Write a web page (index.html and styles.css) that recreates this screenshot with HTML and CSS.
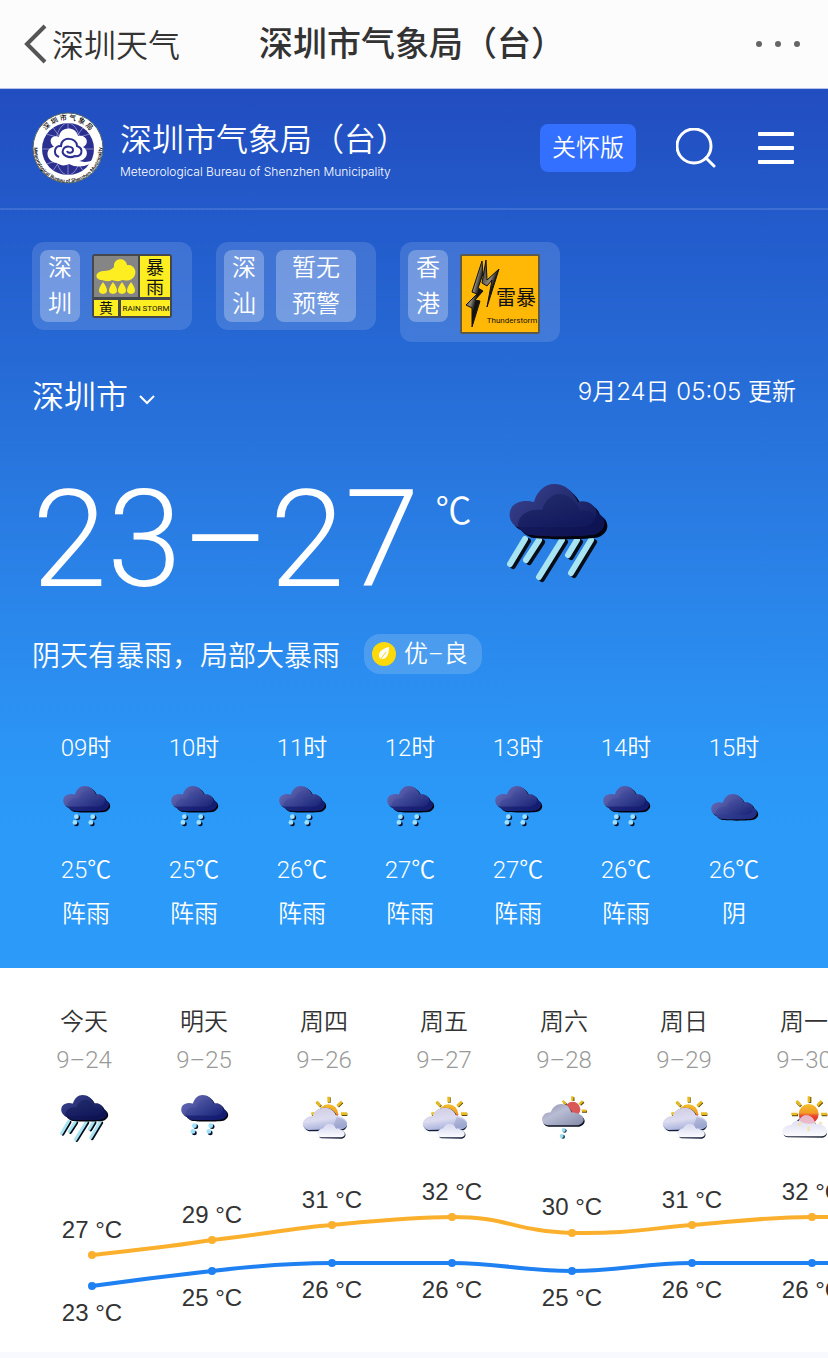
FILE: index.html
```html
<!DOCTYPE html>
<html lang="zh-CN">
<head>
<meta charset="utf-8">
<meta name="viewport" content="width=device-width, initial-scale=1">
<title>深圳市气象局（台）</title>
<link rel="stylesheet" href="styles.css">
</head>
<body>
<svg class="defs" aria-hidden="true">
  <defs>
    <linearGradient id="stormBack" x1="0" y1="0" x2="1" y2="0.6"><stop offset="0" stop-color="#3c4490"/><stop offset="1" stop-color="#141b5c"/></linearGradient>
    <linearGradient id="stormFront" x1="0" y1="0" x2="0.4" y2="1"><stop offset="0" stop-color="#1e2a66"/><stop offset="1" stop-color="#12185c"/></linearGradient>
    <linearGradient id="showerBack" x1="0" y1="0" x2="1" y2="0.6"><stop offset="0" stop-color="#6e72bc"/><stop offset="1" stop-color="#202a7c"/></linearGradient>
    <linearGradient id="showerFront" x1="0" y1="0" x2="1" y2="0.8"><stop offset="0" stop-color="#5560ae"/><stop offset="1" stop-color="#1d277a"/></linearGradient>
    <linearGradient id="sun" x1="0" y1="0" x2="0" y2="1"><stop offset="0" stop-color="#f3c02a"/><stop offset="0.45" stop-color="#f39a27"/><stop offset="0.6" stop-color="#e8442c"/><stop offset="1" stop-color="#e2262a"/></linearGradient>
    <linearGradient id="pale" x1="0" y1="0" x2="0.3" y2="1"><stop offset="0" stop-color="#cfc9de"/><stop offset="0.6" stop-color="#dcdcf0"/><stop offset="1" stop-color="#a9b2dc"/></linearGradient>
    <linearGradient id="white" x1="0" y1="0" x2="0" y2="1"><stop offset="0" stop-color="#d4d6ee"/><stop offset="1" stop-color="#fbfbff"/></linearGradient>
    <linearGradient id="gray" x1="0" y1="0" x2="1" y2="1"><stop offset="0" stop-color="#8e8fae"/><stop offset="0.4" stop-color="#b9bdd4"/><stop offset="1" stop-color="#8389a8"/></linearGradient>
    <linearGradient id="bolt" x1="0" y1="0" x2="1" y2="1"><stop offset="0" stop-color="#222"/><stop offset="0.45" stop-color="#8d8878"/><stop offset="0.6" stop-color="#111"/><stop offset="1" stop-color="#222"/></linearGradient>
    <path id="cloud" d="M15 47C4 43 4 27 14 23C20 20 26 21 31 22C34 11 42 4 51 4C62 4 70 11 75 22C84 19 92 25 94 32C104 38 104 49 93 54C86 57 28 57 24 54C20 52 17 50 15 47Z"/>
    <path id="cloudFront" d="M15 47C14 35 26 28 39 30C42 20 49 14 56 14C66 14 73 21 77 31C88 29 94 35 92 42C91 46 84 47 74 47H16Z"/>
    <path id="cloudBase" d="M15 47H74C88 47 94 42 93 32C104 38 104 49 93 54C86 57 28 57 24 54C20 52 17 50 15 47Z"/>
  </defs>
  <symbol id="heavy" viewBox="0 0 108 104">
    <g fill="none" stroke-width="6" stroke-linecap="round">
      <path stroke="#060d18" d="M25 61L10 86M39 62L26 82M62 62L39 99M77 62L68 77M91 62L71 95"/>
      <path stroke="#a8e4f2" d="M22 59L7 84M36 60L23 80M59 60L36 97M74 60L65 75M88 60L68 93"/>
    </g>
    <use href="#cloud" x="3" y="3" fill="#02040f"/>
    <use href="#cloud" fill="url(#stormBack)"/>
    <use href="#cloudFront" fill="url(#stormFront)" opacity=".8"/>
    <use href="#cloudBase" fill="#0c1250" opacity=".75"/>
  </symbol>
  <symbol id="shower" viewBox="0 0 108 104">
    <g fill="#060d28"><circle cx="37" cy="70" r="5"/><circle cx="34" cy="83" r="5"/><circle cx="71" cy="70" r="5"/><circle cx="67" cy="83" r="5"/></g>
    <g fill="#9fe2ff"><circle cx="34" cy="68" r="5"/><circle cx="31" cy="80" r="5"/><circle cx="68" cy="68" r="5"/><circle cx="64" cy="80" r="5"/></g>
    <use href="#cloud" x="3" y="3" fill="#02040f"/>
    <use href="#cloud" fill="url(#showerBack)"/>
    <use href="#cloudFront" fill="url(#showerFront)" opacity=".7"/>
    <use href="#cloudBase" fill="#10196e" opacity=".75"/>
  </symbol>
  <symbol id="overcast" viewBox="0 -17 108 104">
    <use href="#cloud" x="3" y="3" fill="#02040f"/>
    <use href="#cloud" fill="url(#showerBack)"/>
    <use href="#cloudFront" fill="url(#showerFront)" opacity=".7"/>
    <use href="#cloudBase" fill="#26358c" opacity=".6"/>
  </symbol>
  <symbol id="partly" viewBox="-4 0 156 150">
    <path d="M90 13V29M129 28L116 41M144 65H127M53 28L65 41M38 65H48" stroke="#5c4a10" stroke-width="8"/>
    <path d="M88 11V28M127 26L114 39M143 62H125M51 26L63 39M36 62H46" stroke="#e8bc1e" stroke-width="8"/>
    <circle cx="87" cy="64" r="30" fill="url(#sun)"/>
    <path d="M30 115C6 108 4 78 42 70C46 54 60 45 76 44C94 44 107 54 113 70C150 82 150 106 128 114Z" fill="#141c38"/>
    <path d="M28 111C2 104 4 74 40 68C46 52 60 44 76 44C94 44 105 54 109 66C150 76 152 100 130 108Z" fill="url(#pale)"/>
    <path d="M112 72C146 80 148 98 128 106H100Z" fill="#8e96c0" opacity=".45"/>
    <path d="M66 136C54 134 54 114 76 109C82 100 104 96 114 109C144 112 144 134 128 137Z" fill="#141c38"/>
    <path d="M64 133C50 132 48 111 72 106C75 97 83 92 91 92C99 92 107 97 110 106C142 110 142 131 126 133Z" fill="url(#white)"/>
  </symbol>
  <symbol id="drizzle" viewBox="0 0 156 150">
    <path d="M106 13V24M137 27L127 36M147 56H132M77 27L86 36" stroke="#5c4a10" stroke-width="7"/>
    <path d="M103 10V23M134 24L124 34M145 53H131M74 23L83 33" stroke="#e8bc1e" stroke-width="7"/>
    <circle cx="104" cy="49" r="23" fill="#d95757"/>
    <g transform="translate(3 4)"><path d="M28 97C4 92 8 58 38 58C44 42 56 33 70 33C86 33 96 43 100 58C142 60 148 90 120 97Z" fill="#0c1120"/></g>
    <path d="M28 97C4 92 8 58 38 58C44 42 56 33 70 33C86 33 96 43 100 58C142 60 148 90 120 97Z" fill="url(#gray)"/>
    <g fill="#14324a"><circle cx="80" cy="113" r="6"/><circle cx="75" cy="131" r="6"/></g>
    <g fill="#98dcec"><circle cx="77" cy="111" r="6"/><circle cx="71" cy="129" r="6"/></g>
  </symbol>
  <symbol id="sunny" viewBox="0 0 156 150">
    <path d="M96 12V30M133 27L120 40M148 66H131M42 66H60M57 27L69 40" stroke="#5c4a10" stroke-width="8"/>
    <path d="M93 10V28M131 24L118 37M147 63H129M40 63H58M55 24L68 37" stroke="#e8bc1e" stroke-width="8"/>
    <circle cx="92" cy="63" r="30" fill="url(#sun)"/>
    <path d="M28 133C10 130 12 106 44 99C70 62 98 60 115 96C150 98 156 130 134 134Z" fill="#20263a"/>
    <path d="M28 130C4 126 8 98 40 96C46 84 54 82 62 84C72 60 104 60 112 92C150 92 158 126 132 130Z" fill="url(#white)"/>
    <path d="M63 82C72 62 104 60 111 90C98 94 76 94 63 82Z" fill="#f0a4b4" opacity=".65"/>
    <path d="M92 99V115M61 99L69 88M124 88L131 94" stroke="#f3e4b8" stroke-width="8"/>
  </symbol>
</svg>

<nav class="appbar">
  <button class="back" type="button">
    <svg width="24" height="40" viewBox="0 0 24 40" fill="none" aria-hidden="true"><path d="M21 2L3 20L21 38" stroke="#555" stroke-width="4"/></svg>
    <span>深圳天气</span>
  </button>
  <h1 class="appbar-title">深圳市气象局（台）</h1>
  <button class="more" type="button" aria-label="更多">
    <svg width="44" height="8" viewBox="0 0 44 8" fill="#666" aria-hidden="true"><circle cx="3" cy="4" r="3"/><circle cx="22" cy="4" r="3"/><circle cx="41" cy="4" r="3"/></svg>
  </button>
</nav>

<main>
<section class="hero">
  <header class="brand">
    <svg class="logo" viewBox="0 0 72 72" aria-hidden="true">
      <defs>
        <path id="arcTop" d="M8 36A28 28 0 0 1 64 36"/>
        <path id="arcBottom" d="M4 25A34 34 0 1 0 68 25"/>
        <clipPath id="globe"><circle cx="36" cy="37" r="26"/></clipPath>
      </defs>
      <circle cx="36" cy="36" r="35" fill="#fff" stroke="#566" stroke-width="1"/>
      <circle cx="36" cy="37" r="26" fill="#2b2f8f"/>
      <g clip-path="url(#globe)" fill="none" stroke="#a9aee0" stroke-width=".7">
        <ellipse cx="36" cy="37" rx="13" ry="26"/><path d="M36 10V64M10 37H62M14 22Q36 30 58 22M14 52Q36 44 58 52M20 14L52 60M52 14L20 60"/>
      </g>
      <path d="M25 51C14 50 12 36 22 35C15 29 20 22 27 25C28 14 44 14 46 24C55 22 58 32 51 35C58 39 55 48 47 49C52 51 58 50 63 47C59 54 46 57 37 52C33 54 29 54 25 51Z" fill="#fff"/>
      <path d="M27 45C20 42 23 33 29 34C29 24 45 25 45 34C53 37 49 46 43 44C37 47 29 43 31 38C33 33 41 34 41 38C41 41 36 42 35 39" fill="none" stroke="#2b2f8f" stroke-width="2"/>
      <text class="logo-cn"><textPath href="#arcTop" startOffset="50%">深 圳 市 气 象 局</textPath></text>
      <text class="logo-en"><textPath href="#arcBottom" startOffset="50%">Meteorological Bureau of Shenzhen Municipality</textPath></text>
    </svg>
    <div class="brand-name">
      <p class="brand-cn">深圳市气象局（台）</p>
      <p class="brand-en">Meteorological Bureau of Shenzhen Municipality</p>
    </div>
    <button class="care" type="button">关怀版</button>
    <button class="icon-button" type="button" aria-label="搜索">
      <svg width="42" height="40" viewBox="0 0 42 40" fill="none" stroke="#fff" stroke-width="3" aria-hidden="true"><circle cx="18" cy="18" r="17"/><path d="M30 30L38 38" stroke-linecap="round"/></svg>
    </button>
    <button class="icon-button" type="button" aria-label="菜单">
      <svg width="36" height="32" viewBox="0 0 36 32" fill="#fff" aria-hidden="true"><rect width="36" height="4" rx="1"/><rect y="14" width="36" height="4" rx="1"/><rect y="28" width="36" height="4" rx="1"/></svg>
    </button>
  </header>

  <ul class="alerts">
    <li class="alert">
      <span class="place">深圳</span>
      <svg class="sign" width="80" height="64" viewBox="0 0 80 64" role="img" aria-label="暴雨黄色预警">
        <rect width="80" height="64" rx="3" fill="#44484c"/>
        <rect x="2" y="2" width="44" height="41" fill="#858585"/>
        <path d="M48 2H78V43H48ZM2 46H26V62H2ZM29 46H78V62H29Z" fill="#fdee21"/>
        <path d="M10 26C3 26 2 18 11 17C16 17 19 16 22 13C21 3 34 3 35 11C43 10 46 19 41 24C37 28 32 26 30 26C27 28 23 27 20 26C17 28 13 27 10 26Z" fill="#fdee21"/>
        <path d="M11 28Q3 39 11 40Q19 39 11 28ZM21 28Q13 39 21 40Q29 39 21 28ZM30 28Q22 39 30 40Q38 39 30 28ZM39 28Q31 39 39 40Q47 39 39 28Z" fill="#fdee21"/>
        <g class="sign-text"><text x="63" y="20" font-size="18">暴</text><text x="63" y="40" font-size="18">雨</text><text x="14" y="59" font-size="14">黄</text><text class="latin" x="54" y="57" font-size="8">RAIN STORM</text></g>
      </svg>
    </li>
    <li class="alert">
      <span class="place">深汕</span>
      <span class="none">暂无预警</span>
    </li>
    <li class="alert">
      <span class="place">香港</span>
      <svg class="sign" width="80" height="80" viewBox="0 0 80 80" role="img" aria-label="雷暴警告">
        <rect x="1" y="1" width="78" height="78" rx="1" fill="#ffb806" stroke="#5c5a4c" stroke-width="2"/>
        <path d="M22 7L12 38L17 40L6 51L12 54V73L20 47L15 46L23 37L18 34L23 20Z" fill="url(#bolt)" stroke="#111"/>
        <path d="M26 6L22 29L27 32L32 26L27 53L39 15L27 26Z" fill="url(#bolt)" stroke="#111"/>
        <g class="sign-text"><text x="56" y="51" font-size="20">雷暴</text><text class="latin" x="52" y="69" font-size="8">Thunderstorm</text></g>
      </svg>
    </li>
  </ul>

  <div class="where">
    <label class="city">
      <select aria-label="选择城市"><option>深圳市</option></select>
      <svg width="16" height="10" viewBox="0 0 16 10" fill="none" aria-hidden="true"><path d="M1 1L8 8L15 1" stroke="#fff" stroke-width="2"/></svg>
    </label>
    <time class="updated">9月24日 05:05 更新</time>
  </div>

  <div class="now">
    <span class="range">23–27</span>
    <span class="unit">℃</span>
    <svg class="now-icon" role="img" aria-label="暴雨"><use href="#heavy"/></svg>
  </div>

  <div class="summary">
    <p>阴天有暴雨，局部大暴雨</p>
    <span class="air">
      <svg width="24" height="24" viewBox="0 0 24 24" aria-hidden="true"><circle cx="12" cy="12" r="12" fill="#fbd90b"/><path d="M17 5C9 7 5 11 8 17C15 18 17 12 17 5Z" fill="#fff"/><path d="M7 19L14 10" stroke="#fbd90b" fill="none"/></svg>
      优–良
    </span>
  </div>

  <ul class="hours">
    <li><time>09时</time><svg class="icon"><use href="#shower"/></svg><span>25<span class="degree">℃</span></span><span class="sky">阵雨</span></li>
    <li><time>10时</time><svg class="icon"><use href="#shower"/></svg><span>25<span class="degree">℃</span></span><span class="sky">阵雨</span></li>
    <li><time>11时</time><svg class="icon"><use href="#shower"/></svg><span>26<span class="degree">℃</span></span><span class="sky">阵雨</span></li>
    <li><time>12时</time><svg class="icon"><use href="#shower"/></svg><span>27<span class="degree">℃</span></span><span class="sky">阵雨</span></li>
    <li><time>13时</time><svg class="icon"><use href="#shower"/></svg><span>27<span class="degree">℃</span></span><span class="sky">阵雨</span></li>
    <li><time>14时</time><svg class="icon"><use href="#shower"/></svg><span>26<span class="degree">℃</span></span><span class="sky">阵雨</span></li>
    <li><time>15时</time><svg class="icon"><use href="#overcast"/></svg><span>26<span class="degree">℃</span></span><span class="sky">阴</span></li>
  </ul>
</section>

<section class="week">
  <ul class="days">
    <li><span>今天</span><time>9–24</time><svg class="icon"><use href="#heavy"/></svg></li>
    <li><span>明天</span><time>9–25</time><svg class="icon"><use href="#shower"/></svg></li>
    <li><span>周四</span><time>9–26</time><svg class="icon"><use href="#partly"/></svg></li>
    <li><span>周五</span><time>9–27</time><svg class="icon"><use href="#partly"/></svg></li>
    <li><span>周六</span><time>9–28</time><svg class="icon"><use href="#drizzle"/></svg></li>
    <li><span>周日</span><time>9–29</time><svg class="icon"><use href="#partly"/></svg></li>
    <li><span>周一</span><time>9–30</time><svg class="icon"><use href="#sunny"/></svg></li>
  </ul>
  <svg class="chart" width="840" height="209" viewBox="0 0 840 209" role="img" aria-label="七天最高和最低气温">
    <g fill="none" stroke-width="4">
      <path stroke="#fbb02d" d="M68 112C104 108 152 103 188 97C230 93 268 85 308 82C350 78 388 74 428 74C484 74 490 88 548 90C604 91 628 85 668 82C716 78 744 74 788 74H840"/>
      <path stroke="#1f80f2" d="M68 143C104 138 152 132 188 128C230 123 262 120 308 120H428C474 120 500 128 548 128C596 128 620 120 668 120H840"/>
    </g>
    <g fill="#fbb02d"><circle cx="68" cy="112" r="4"/><circle cx="188" cy="97" r="4"/><circle cx="308" cy="82" r="4"/><circle cx="428" cy="74" r="4"/><circle cx="548" cy="90" r="4"/><circle cx="668" cy="82" r="4"/><circle cx="788" cy="74" r="4"/></g>
    <g fill="#1f80f2"><circle cx="68" cy="143" r="4"/><circle cx="188" cy="128" r="4"/><circle cx="308" cy="120" r="4"/><circle cx="428" cy="120" r="4"/><circle cx="548" cy="128" r="4"/><circle cx="668" cy="120" r="4"/><circle cx="788" cy="120" r="4"/></g>
    <g class="chart-text">
      <text x="68" y="95">27 °C</text><text x="188" y="80">29 °C</text><text x="308" y="65">31 °C</text><text x="428" y="57">32 °C</text><text x="548" y="72">30 °C</text><text x="668" y="65">31 °C</text><text x="788" y="57">32 °C</text>
      <text x="68" y="178">23 °C</text><text x="188" y="163">25 °C</text><text x="308" y="155">26 °C</text><text x="428" y="155">26 °C</text><text x="548" y="163">25 °C</text><text x="668" y="155">26 °C</text><text x="788" y="155">26 °C</text>
    </g>
  </svg>
</section>
</main>
</body>
</html>
```

FILE: styles.css
```css
* {
  box-sizing: border-box;
}

body {
  margin: 0;
  background: #f8f8ff;
  color: #333;
  font-family: Roboto, "Noto Sans CJK SC", sans-serif;
  font-size: 24px;
  font-weight: 350;
  line-height: 32px;
}

h1, p, ul {
  margin: 0;
  padding: 0;
}

ul {
  list-style: none;
}

button, select {
  padding: 0;
  border: 0;
  background: none;
  color: inherit;
  font: inherit;
}

svg {
  display: block;
  flex: none;
}

.defs {
  position: absolute;
  width: 0;
  height: 0;
}

.appbar {
  display: grid;
  grid-template-columns: 1fr auto 1fr;
  align-items: center;
  height: 89px;
  padding: 0 28px 0 24px;
  border-bottom: 1px solid #b4c3ea;
  background: #fcfcfc;
}

.back {
  display: flex;
  align-items: center;
  gap: 4px;
  font-size: 32px;
}

.back span {
  padding-top: 4px;
}

.appbar-title {
  font-size: 34px;
  font-weight: 500;
  line-height: 48px;
}

.more {
  justify-self: end;
}

.hero {
  padding-bottom: 38px;
  background: linear-gradient(#224dc0, #235ccc 16%, #2669d5 30%, #2a83e8 56%, #2b94f4 74%, #2b9af8 84%, #2b9af8);
  color: #fff;
}

.brand {
  display: flex;
  align-items: center;
  height: 121px;
  padding: 0 34px 2px 32px;
  border-bottom: 2px solid #ffffff20;
}

.logo {
  width: 72px;
  height: 72px;
}

.logo-cn {
  font-size: 7px;
  font-weight: 500;
  text-anchor: middle;
  word-spacing: normal;
}

.logo-en {
  font-size: 5px;
  font-weight: 500;
  text-anchor: middle;
}

.brand-name {
  flex: 1;
  padding: 8px 0 0 16px;
  white-space: nowrap;
}

.brand-cn {
  font-size: 32px;
  line-height: 40px;
}

.brand-en {
  font-family: Inter, sans-serif;
  font-size: 12px;
  font-weight: 300;
  line-height: 24px;
}

.care {
  width: 96px;
  height: 48px;
  border-radius: 8px;
  background: #3370ff;
}

.icon-button {
  margin-left: 40px;
}

.alerts {
  display: flex;
  align-items: flex-start;
  gap: 24px;
  padding: 32px 32px 0;
}

.alert {
  display: flex;
  align-items: flex-start;
  gap: 12px;
  width: 160px;
  padding: 8px;
  border-radius: 12px;
  background: #ffffff20;
}

.place, .none {
  width: 40px;
  padding: 0 8px;
  border-radius: 8px;
  background: #ffffff44;
  line-height: 36px;
}

.none {
  width: 80px;
  padding: 0 16px;
}

.sign {
  margin-top: 4px;
}

.sign-text {
  fill: #111;
  font-weight: 400;
  text-anchor: middle;
}

.latin {
  font-family: Roboto, sans-serif;
}

.where {
  display: flex;
  justify-content: space-between;
  padding: 30px 32px 0;
}

.city {
  display: flex;
  align-items: center;
  gap: 10px;
}

.city select {
  height: 50px;
  appearance: none;
  font-size: 32px;
}

.city svg {
  margin-top: 6px;
}

.updated {
  font-family: Inter, "Noto Sans CJK SC", sans-serif;
  line-height: 40px;
}

.now {
  display: flex;
  align-items: flex-start;
  padding: 58px 32px 0;
}

.range {
  font-size: 135px;
  font-weight: 300;
  line-height: 120px;
}

.unit {
  padding: 4px 0 0 16px;
  font-size: 36px;
  line-height: 48px;
}

.unit, .degree {
  font-family: "Noto Sans CJK SC", sans-serif;
}

.now-icon {
  width: 108px;
  height: 104px;
  margin-left: 32px;
}

.summary {
  display: flex;
  align-items: center;
  gap: 24px;
  padding: 34px 32px 0;
  font-size: 28px;
}

.summary p {
  padding-top: 6px;
}

.air {
  display: flex;
  align-items: center;
  gap: 8px;
  height: 40px;
  padding: 0 14px 0 8px;
  border-radius: 16px;
  background: #ffffff28;
  font-size: 24px;
}

.hours {
  display: flex;
  padding: 58px 32px 0;
  overflow: hidden;
}

.hours li, .days li {
  display: flex;
  flex: 0 0 108px;
  flex-direction: column;
  align-items: center;
}

.degree {
  line-height: 1;
}

.icon {
  width: 52px;
  height: 50px;
}

.hours .icon {
  margin: 20px 0;
}

.sky {
  margin-top: 12px;
}

.week {
  padding: 38px 0 0 24px;
  margin-bottom: 6px;
  overflow: hidden;
  background: #fff;
}

.days {
  display: flex;
}

.days li {
  flex-basis: 120px;
}

.days time {
  margin: 6px 0 17px;
  color: #999;
}

.chart-text {
  fill: #333;
  font-family: "Liberation Sans", sans-serif;
  font-size: 24px;
  font-weight: 400;
  text-anchor: middle;
}
```
